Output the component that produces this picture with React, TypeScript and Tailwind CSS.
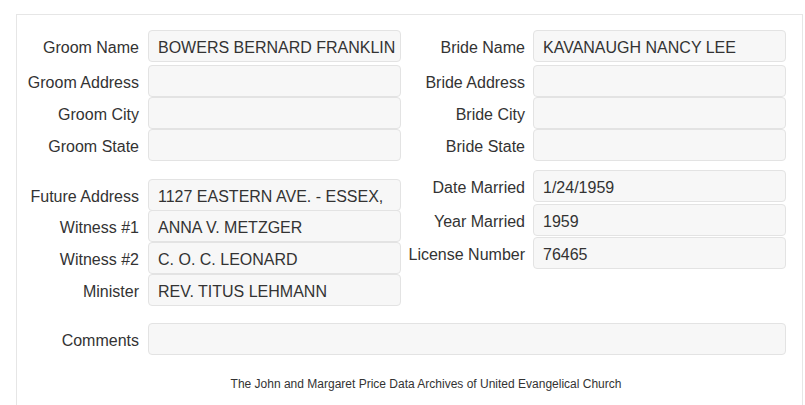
import React from 'react';

type Field = { label: string; value?: string; gap?: string };

const Row = ({ label, value, labelW, gap, mt }: { label: string; value?: string; labelW: string; gap: string; mt: string }) => (
  <div className={`flex items-center ${mt}`}>
    <label className={`${labelW} ${gap} shrink-0 pt-[4px] text-right text-[16px] text-[#333]`}>{label}</label>
    <div className="w-[253px] h-[32px] shrink-0 flex items-center px-[9px] pt-[3px] bg-[#f7f7f7] border border-[#e3e3e3] rounded-[4px] text-[16px] text-[#333] whitespace-nowrap overflow-hidden">
      {value}
    </div>
  </div>
);

const groom: Field[] = [
  { label: 'Groom Name', value: 'BOWERS BERNARD FRANKLIN', gap: 'mt-0' },
  { label: 'Groom Address', gap: 'mt-[3px]' },
  { label: 'Groom City', gap: 'mt-0' },
  { label: 'Groom State', gap: 'mt-0' },
];

const bride: Field[] = [
  { label: 'Bride Name', value: 'KAVANAUGH NANCY LEE', gap: 'mt-0' },
  { label: 'Bride Address', gap: 'mt-[3px]' },
  { label: 'Bride City', gap: 'mt-0' },
  { label: 'Bride State', gap: 'mt-0' },
];

const wedding: Field[] = [
  { label: 'Future Address', value: '1127 EASTERN AVE. - ESSEX,', gap: 'mt-0' },
  { label: 'Witness #1', value: 'ANNA V. METZGER', gap: '-mt-[1px]' },
  { label: 'Witness #2', value: 'C. O. C. LEONARD', gap: 'mt-0' },
  { label: 'Minister', value: 'REV. TITUS LEHMANN', gap: 'mt-0' },
];

const license: Field[] = [
  { label: 'Date Married', value: '1/24/1959', gap: 'mt-0' },
  { label: 'Year Married', value: '1959', gap: 'mt-[2px]' },
  { label: 'License Number', value: '76465', gap: 'mt-[1px]' },
];

export default function App() {
  return (
    <div className="w-[805px] h-[405px] overflow-hidden bg-white pl-[16px] pt-[14px]" style={{ fontFamily: '"Liberation Sans", Arial, sans-serif' }}>
      <div className="w-[787px] h-[420px] border-l border-t border-r border-[#e6e6e6] pt-[15px] pr-[16px]">
        <div className="flex">
          <div className="w-[384px] flex flex-col">
            {groom.map(f => (
              <Row key={f.label} label={f.label} value={f.value} labelW="w-[122px]" gap="mr-[9px]" mt={f.gap!} />
            ))}
          </div>
          <div className="w-[385px] flex flex-col">
            {bride.map(f => (
              <Row key={f.label} label={f.label} value={f.value} labelW="w-[124px]" gap="mr-[8px]" mt={f.gap!} />
            ))}
          </div>
        </div>

        <div className="flex mt-[9px]">
          <div className="w-[384px] flex flex-col pt-[9px]">
            {wedding.map(f => (
              <Row key={f.label} label={f.label} value={f.value} labelW="w-[122px]" gap="mr-[9px]" mt={f.gap!} />
            ))}
          </div>
          <div className="w-[385px] flex flex-col">
            {license.map(f => (
              <Row key={f.label} label={f.label} value={f.value} labelW="w-[124px]" gap="mr-[8px]" mt={f.gap!} />
            ))}
          </div>
        </div>

        <div className="flex items-center mt-[17px]">
          <label className="w-[122px] mr-[9px] shrink-0 pt-[4px] text-right text-[16px] text-[#333]">Comments</label>
          <div className="w-[638px] h-[32px] bg-[#f7f7f7] border border-[#e3e3e3] rounded-[4px]" />
        </div>

        <p className="mt-[20px] pl-[49px] text-center text-[12px] text-[#333]">
          The John and Margaret Price Data Archives of United Evangelical Church
        </p>
      </div>
    </div>
  );
}
